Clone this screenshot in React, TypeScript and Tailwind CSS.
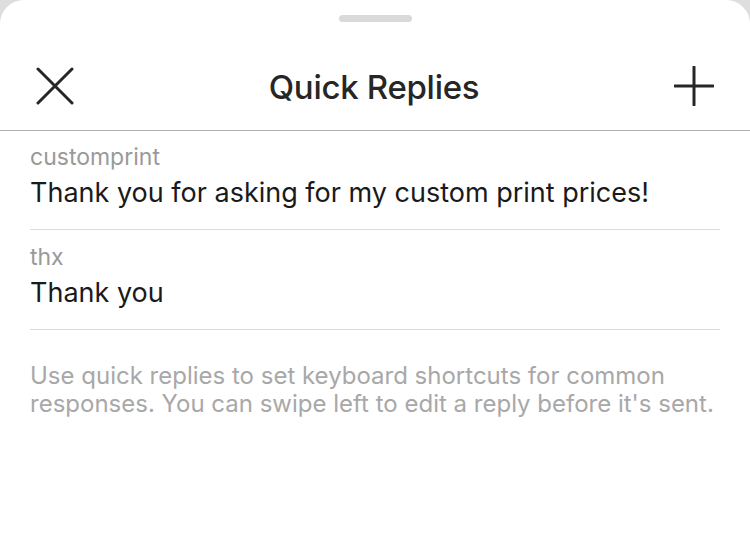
import React from 'react';

interface QuickReply {
    shortcut: string;
    message: string;
}

const REPLIES: QuickReply[] = [
    { shortcut: 'customprint', message: 'Thank you for asking for my custom print prices!' },
    { shortcut: 'thx', message: 'Thank you' },
];

const CloseIcon = () => (
    <svg width="38" height="38" viewBox="0 0 38 38" fill="none" stroke="#262626" strokeWidth="3" strokeLinecap="round">
        <path d="M2 2 L36 36 M36 2 L2 36" />
    </svg>
);

const PlusIcon = () => (
    <svg width="40" height="40" viewBox="0 0 40 40" fill="none" stroke="#262626" strokeWidth="3" strokeLinecap="round">
        <path d="M20 1 V39 M1 20 H39" />
    </svg>
);

export default function App() {
    return (
        <div className="w-[750px] h-[551px] bg-[#dedede] overflow-hidden" style={{ fontFamily: 'Inter, "Noto Sans", sans-serif' }}>
            <div className="h-full bg-white rounded-t-[24px] flex flex-col">
                {/* drag handle */}
                <div className="pt-[15px] flex justify-center">
                    <div className="w-[73px] h-[7px] rounded-full bg-[#d9d9d9]" />
                </div>

                {/* header */}
                <div className="mt-[20px] h-[89px] border-b border-[#b3b3b3] flex items-center justify-between px-[36px]">
                    <button className="w-[38px] h-[38px] flex items-center justify-center">
                        <CloseIcon />
                    </button>
                    <h1 className="mt-[3px] text-[33px] font-medium text-[#262626] tracking-[-0.3px]">Quick Replies</h1>
                    <button className="w-[40px] h-[40px] flex items-center justify-center">
                        <PlusIcon />
                    </button>
                </div>

                {/* replies */}
                <div className="px-[30px]">
                    {REPLIES.map((reply, i) => (
                        <div key={reply.shortcut} className={`${i === 0 ? 'pt-[12px]' : 'pt-[13px]'} pb-[19px] border-b border-[#dbdbdb]`}>
                            <div className="text-[23px] leading-[28px] text-[#999999]">{reply.shortcut}</div>
                            <div className="mt-[5px] text-[27px] leading-[34px] text-[#1a1a1a]">{reply.message}</div>
                        </div>
                    ))}
                    <p className="pt-[32px] text-[24px] leading-[28px] text-[#a8a8a8]">
                        Use quick replies to set keyboard shortcuts for common responses. You can swipe left to edit a reply before it's sent.
                    </p>
                </div>
            </div>
        </div>
    );
}
